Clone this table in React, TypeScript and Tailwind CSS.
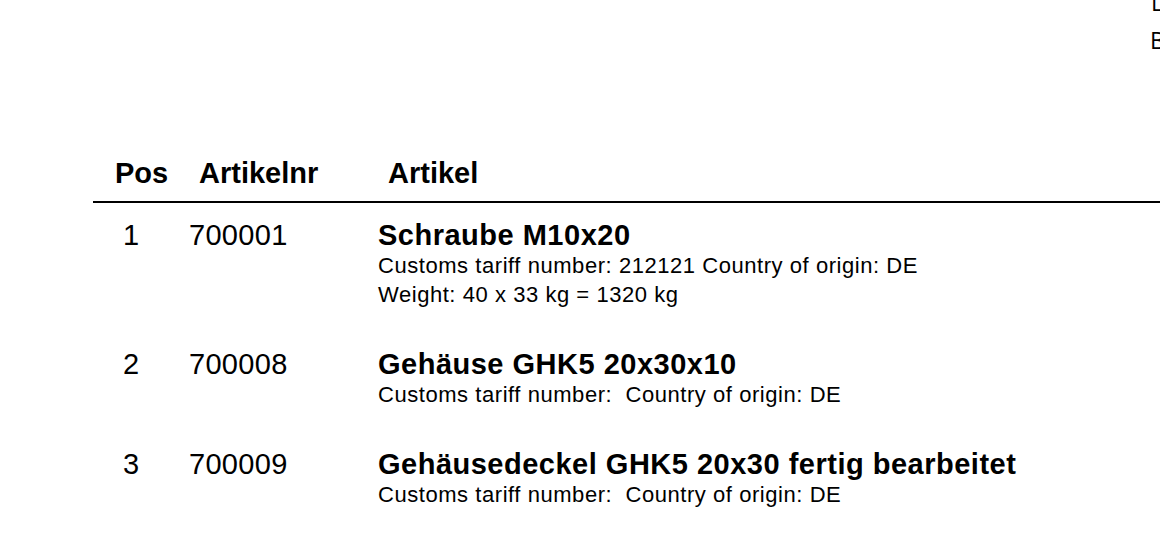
import React from 'react';

interface Item {
    pos: number,
    nr: string,
    title: string,
    lines: string[]
}

const items: Item[] = [
    {
        pos: 1,
        nr: '700001',
        title: 'Schraube M10x20',
        lines: ['Customs tariff number: 212121 Country of origin: DE', 'Weight: 40 x 33 kg = 1320 kg']
    },
    {
        pos: 2,
        nr: '700008',
        title: 'Gehäuse GHK5 20x30x10',
        lines: ['Customs tariff number:\u00a0 Country of origin: DE']
    },
    {
        pos: 3,
        nr: '700009',
        title: 'Gehäusedeckel GHK5 20x30 fertig bearbeitet',
        lines: ['Customs tariff number:\u00a0 Country of origin: DE']
    }
];

const ItemRow: React.FC<{ data: Item }> = ({ data }) => {
    return (
        <div className="flex text-black">
            <div className="w-[66px] pl-[123px] box-content text-[29px] leading-[32px]">{data.pos}</div>
            <div className="w-[189px] text-[29px] leading-[32px] tracking-[0.3px]">{data.nr}</div>
            <div className="flex flex-col">
                <div className="text-[29px] leading-[32px] font-bold tracking-[0.5px] whitespace-nowrap">{data.title}</div>
                {data.lines.map((l, i) => (
                    <div key={i} className="text-[22px] leading-[29px] tracking-[0.55px] whitespace-nowrap">{l}</div>
                ))}
            </div>
        </div>
    )
}

export default function App() {
    return (
        <div className="w-[1160px] h-[548px] overflow-hidden bg-white font-['Liberation_Sans',Arial,sans-serif]">
            <div className="-mt-[17px] pl-[1151px] font-['Open_Sans',sans-serif] text-[23px] leading-[38px] whitespace-nowrap text-black">
                <div>Lieferdatum:</div>
                <div className="-ml-px">Bestelldatum:</div>
            </div>
            <div className="mt-[98px] flex pl-[115px] text-[29px] leading-[32px] font-bold text-black">
                <div className="w-[84px]">Pos</div>
                <div className="w-[189px]">Artikelnr</div>
                <div>Artikel</div>
            </div>
            <div className="mt-[12px] ml-[93px] border-t-2 border-black"></div>
            <div className="mt-[16px] flex flex-col gap-[39px]">
                {items.map((it) => (
                    <ItemRow key={it.pos} data={it} />
                ))}
            </div>
        </div>
    )
}
